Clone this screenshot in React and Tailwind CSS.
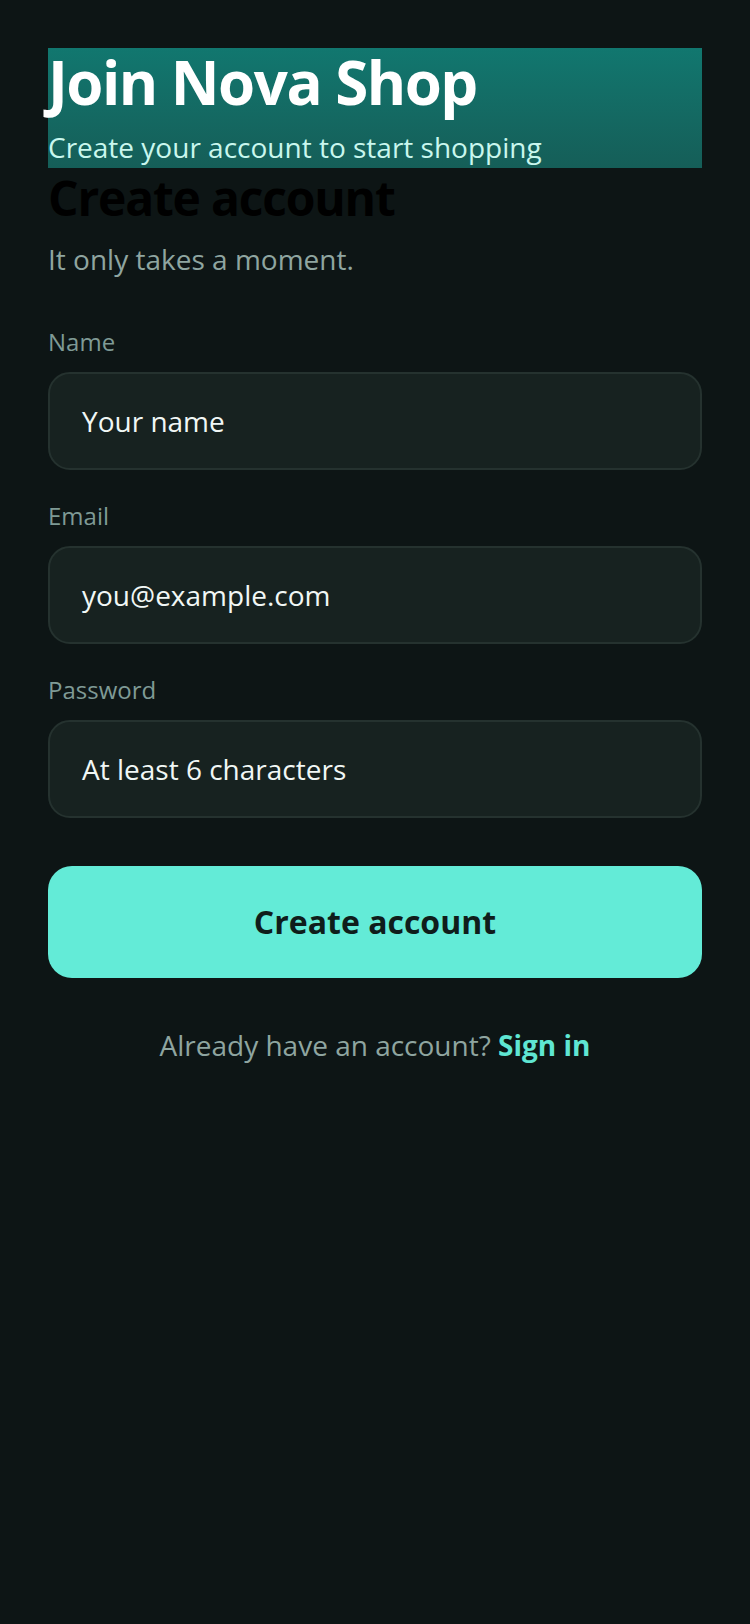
export default function App() {
  const fields = [
    { label: 'Name', placeholder: 'Your name', type: 'text' },
    { label: 'Email', placeholder: 'you@example.com', type: 'email' },
    { label: 'Password', placeholder: 'At least 6 characters', type: 'password' },
  ];

  return (
    <div className="min-h-[1624px] bg-[#0d1515] px-12 pt-12 font-['Open_Sans',sans-serif]">
      <div className="h-[120px] bg-gradient-to-b from-[#11776f] to-[#155e58]">
        <h1 className="text-[60px] font-bold leading-[69px] tracking-[-1.5px] text-white">Join Nova Shop</h1>
        <p className="mt-[10px] text-[28px] leading-[40px] text-[#c9f7ee]">Create your account to start shopping</p>
      </div>

      <h2 className="text-[48px] font-bold leading-[60px] tracking-[-1.2px] text-black">Create account</h2>
      <p className="mt-[10px] text-[28px] leading-[42px] text-[#8fa5a0]">It only takes a moment.</p>

      <form className="mt-[44px]">
        {fields.map((f) => (
          <div key={f.label} className="mb-[28px]">
            <label className="mb-3 block text-[24px] leading-[36px] text-[#7f9a95]">{f.label}</label>
            <div className="flex h-[98px] items-center rounded-[22px] border-2 border-[#25322f] bg-[#172220] px-8 text-[28px] text-[#f1f7f5]">
              {f.placeholder}
            </div>
          </div>
        ))}

        <button
          type="button"
          className="mt-[48px] flex h-28 w-full items-center justify-center rounded-[24px] bg-[#63ebd7] text-[32px] font-bold text-[#0f1d1b]"
        >
          Create account
        </button>
      </form>

      <p className="mt-[46px] text-center text-[28px] leading-[42px] text-[#8fa5a0]">
        Already have an account? <span className="font-bold text-[#5fe6d2]">Sign in</span>
      </p>
    </div>
  );
}
